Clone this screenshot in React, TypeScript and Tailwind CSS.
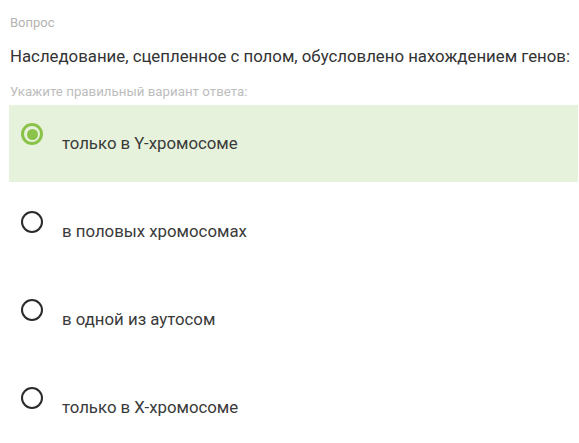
export default function App() {
  const options = [
    { text: "только в Y-хромосоме", checked: true },
    { text: "в половых хромосомах", checked: false },
    { text: "в одной из аутосом", checked: false },
    { text: "только в X-хромосоме", checked: false },
  ];

  return (
    <div className="w-[579px] h-[443px] bg-white overflow-hidden font-['Roboto',sans-serif]">
      <div className="pl-[10px] pt-[15px]">
        <div className="text-[13px] leading-[16px] text-[#b3b3b3]">Вопрос</div>
        <div className="mt-[14px] text-[16.8px] leading-[22px] text-[#333333]">
          Наследование, сцепленное с полом, обусловлено нахождением генов:
        </div>
        <div className="mt-[17px] text-[13.3px] leading-[16px] text-[#bdbdbd]">
          Укажите правильный вариант ответа:
        </div>
      </div>
      <div className="ml-[9px] mr-[1px] mt-[5px] flex flex-col gap-[11px]">
        {options.map((o) => (
          <div
            key={o.text}
            className={
              o.checked
                ? "h-[77px] flex items-start pl-[12px] pt-[18px] bg-[#e6f2dc]"
                : "h-[77px] flex items-start pl-[12px] pt-[18px]"
            }
          >
            {o.checked ? (
              <div className="w-[22px] h-[22px] rounded-full border-[3px] border-[#8bc34a] flex items-center justify-center">
                <div className="w-[11px] h-[11px] rounded-full bg-[#8bc34a]" />
              </div>
            ) : (
              <div className="w-[22px] h-[22px] rounded-full border-[2.5px] border-[#2b2b2b]" />
            )}
            <div className="ml-[19px] mt-[11px] text-[16.8px] leading-[19px] text-[#3a3a3a]">
              {o.text}
            </div>
          </div>
        ))}
      </div>
    </div>
  );
}
